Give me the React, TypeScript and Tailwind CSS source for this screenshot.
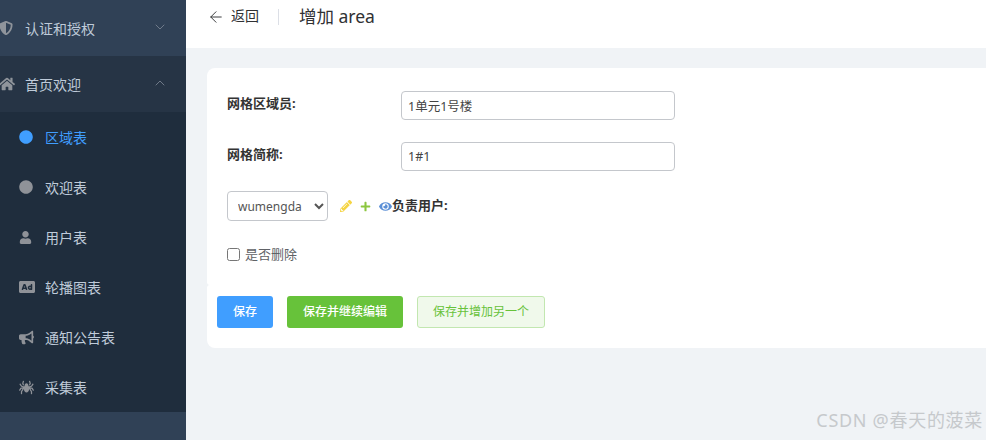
import React from 'react';
import { FaAd, FaBullhorn, FaCircle, FaEye, FaHome, FaPencilAlt, FaPlus, FaShieldAlt, FaSpider, FaUser } from 'react-icons/fa';
import { ChevronDown, ChevronUp, ArrowLeft } from 'lucide-react';

const font = "font-['Noto_Sans','Noto_Sans_CJK_SC',sans-serif]";

const subItems = [
  { label: '区域表', icon: <FaCircle size={14} />, active: true },
  { label: '欢迎表', icon: <FaCircle size={14} /> },
  { label: '用户表', icon: <FaUser size={13} /> },
  { label: '轮播图表', icon: <FaAd size={16} /> },
  { label: '通知公告表', icon: <FaBullhorn size={15} /> },
  { label: '采集表', icon: <FaSpider size={15} /> },
];

const Sidebar: React.FC = () => {
  return (
    <aside className="w-[186px] h-full shrink-0 flex flex-col bg-[#304156] text-[14px] text-[#bfcbd9] overflow-hidden">
      <div className="h-[56px] shrink-0 flex items-center -ml-[1px] text-[#bfcbd9]">
        <span className="w-[26px] flex text-[#8f949b]"><FaShieldAlt size={14} /></span>
        <span className="flex-1">认证和授权</span>
        <ChevronDown size={16} strokeWidth={1.25} className="mr-[18px] -mt-[3px] text-[#7d8795]" />
      </div>
      <div className="h-[56px] shrink-0 flex items-center bg-[#263445]">
        <span className="w-[26px] flex -ml-[1px] text-[#8f949b]"><FaHome size={16} /></span>
        <span className="flex-1">首页欢迎</span>
        <ChevronUp size={16} strokeWidth={1.25} className="mr-[18px] -mt-[3px] text-[#7d8795]" />
      </div>
      <ul className="bg-[#1f2d3d]">
        {subItems.map((item) => (
          <li key={item.label} className={`h-[50px] flex items-center ${item.active ? 'text-[#409eff]' : ''}`}>
            <span className={`w-[45px] pl-[19px] flex ${item.active ? 'text-[#409eff]' : 'text-[#8f9298]'}`}>{item.icon}</span>
            <span>{item.label}</span>
          </li>
        ))}
      </ul>
    </aside>
  );
};

const Field: React.FC<{ label: string; value: string }> = ({ label, value }) => {
  return (
    <div className="flex items-center h-[29px]">
      <label className="w-[194px] pl-[20px] -mt-[3px] text-[13px] font-bold text-[#333]">{label}</label>
      <input
        readOnly
        value={value}
        className="w-[274px] h-[29px] px-[6px] bg-white border border-[#c4c7cc] rounded-[4px] text-[12.5px] text-[#444] outline-none"
      />
    </div>
  );
};

const App: React.FC = () => {
  return (
    <div className={`relative w-[986px] h-[440px] flex overflow-hidden bg-[#f0f3f6] ${font}`}>
      <Sidebar />
      <main className="flex-1 min-w-0 flex flex-col">
        <header className="h-[48px] bg-white flex items-start pl-[22px] pt-[5px] text-[#303133]">
          <ArrowLeft size={18} strokeWidth={1.25} className="-ml-[1px] mt-[3px]" />
          <span className="ml-[6px] text-[14px] leading-[22px]">返回</span>
          <span className="w-px h-[16px] bg-[#dcdfe6] ml-[19px] mt-[4px]" />
          <span className="ml-[20px] text-[17.5px] leading-[22px]">增加 area</span>
        </header>
        <div className="ml-[21px] mt-[20px] flex flex-col">
          <div className="h-[217px] bg-white rounded-tl-[8px] rounded-bl-[3px] pt-[23px]">
            <Field label="网格区域员:" value="1单元1号楼" />
            <div className="mt-[22px]">
              <Field label="网格简称:" value="1#1" />
            </div>
            <div className="flex items-center mt-[20px] pl-[20px] h-[30px]">
              <select className="w-[101px] h-[30px] pl-[6px] bg-white border border-[#c4c7cc] rounded-[4px] text-[12px] text-[#555]">
                <option>wumengda</option>
              </select>
              <FaPencilAlt size={12} className="ml-[12px] text-[#f5d442]" />
              <FaPlus size={11} className="ml-[8px] text-[#8cc63f]" />
              <FaEye size={13} className="ml-[8px] text-[#5b8fd6]" />
              <span className="text-[13px] font-bold text-[#333] -mt-[1px]">负责用户:</span>
            </div>
            <label className="flex items-center mt-[24px] pl-[20px] text-[13px] text-[#606266]">
              <input type="checkbox" className="w-[13px] h-[13px] mr-[5px]" />
              是否删除
            </label>
          </div>
          <div className="h-[63px] bg-white rounded-tl-[3px] rounded-bl-[8px] flex items-start pl-[10px] pt-[11px] text-[12px]">
            <button className="w-[56px] h-[32px] rounded-[3px] bg-[#409eff] text-white font-medium">保存</button>
            <button className="w-[116px] h-[32px] ml-[14px] rounded-[3px] bg-[#67c23a] text-white font-medium">保存并继续编辑</button>
            <button className="w-[128px] h-[32px] ml-[14px] rounded-[3px] bg-[#f0f9eb] border border-[#c2e7b0] text-[#67c23a]">保存并增加另一个</button>
          </div>
        </div>
      </main>
      <span className="absolute right-[3px] bottom-[6px] text-[18px] text-[#c6c9cc] tracking-[0.7px]">CSDN @春天的菠菜</span>
    </div>
  );
};

export default App;
